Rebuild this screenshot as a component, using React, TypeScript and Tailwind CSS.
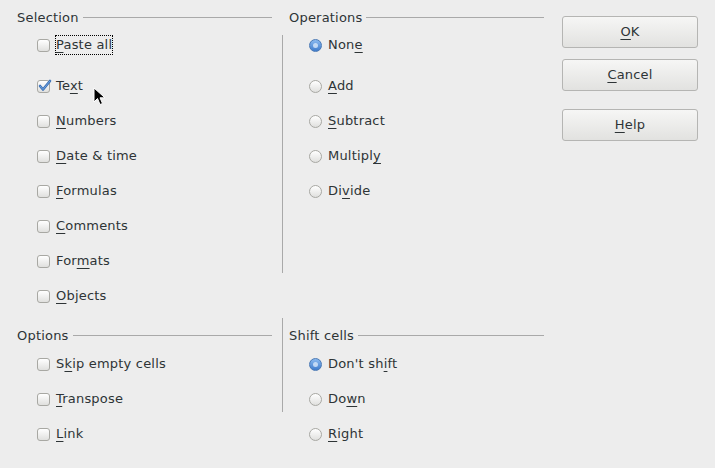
import React from 'react';

type Item = { pre: string; key: string; post: string; checked?: boolean; focus?: boolean };

function Label({ item }: { item: Item }) {
  return (
    <span>
      {item.pre}
      <span className="underline underline-offset-[3px] decoration-1">{item.key}</span>
      {item.post}
    </span>
  );
}

function Checkbox({ checked }: { checked?: boolean }) {
  return (
    <span className="relative w-[13px] h-[13px] shrink-0 rounded-[3px] border border-[#a8a8a3] bg-gradient-to-b from-[#ffffff] to-[#e0e0de]">
      {checked && (
        <svg className="absolute left-[0px] top-[-2px]" width="14" height="13" viewBox="0 0 14 13">
          <path d="M2 7 L5 10.5 L12 2" fill="none" stroke="#3a6fb5" strokeWidth="2.6" strokeLinecap="round" strokeLinejoin="round" />
          <path d="M2 7 L5 10.5 L12 2" fill="none" stroke="#6fa3e0" strokeWidth="1" strokeLinecap="round" strokeLinejoin="round" />
        </svg>
      )}
    </span>
  );
}

function Radio({ checked }: { checked?: boolean }) {
  return checked ? (
    <span className="relative w-[13px] h-[13px] shrink-0 rounded-full border border-[#4a79b5] bg-gradient-to-b from-[#8bbaf0] to-[#3f7ccc] flex items-center justify-center">
      <span className="w-[5px] h-[5px] rounded-full bg-[#d9e8fa] opacity-80" />
    </span>
  ) : (
    <span className="w-[13px] h-[13px] shrink-0 rounded-full border border-[#a8a8a3] bg-gradient-to-b from-[#ffffff] to-[#e0e0de]" />
  );
}

function Header({ title }: { title: string }) {
  return (
    <div className="h-[20px] flex items-center gap-[4px]">
      <span>{title}</span>
      <span className="flex-1 h-px bg-[#a9a9a9] mt-[-1px]" />
    </div>
  );
}

function CheckRow({ item }: { item: Item }) {
  return (
    <div className="h-[20px] flex items-center gap-[6px]">
      <Checkbox checked={item.checked} />
      {item.focus ? (
        <span className="ml-[-1px] border border-dotted border-black leading-[18px]">
          <Label item={item} />
        </span>
      ) : (
        <Label item={item} />
      )}
    </div>
  );
}

function RadioRow({ item }: { item: Item }) {
  return (
    <div className="h-[20px] flex items-center gap-[6px]">
      <Radio checked={item.checked} />
      <Label item={item} />
    </div>
  );
}

const selection: Item[] = [
  { pre: '', key: 'P', post: 'aste all', focus: true },
  { pre: 'Te', key: 'x', post: 't', checked: true },
  { pre: '', key: 'N', post: 'umbers' },
  { pre: '', key: 'D', post: 'ate & time' },
  { pre: '', key: 'F', post: 'ormulas' },
  { pre: '', key: 'C', post: 'omments' },
  { pre: 'For', key: 'm', post: 'ats' },
  { pre: '', key: 'O', post: 'bjects' },
];

const operations: Item[] = [
  { pre: 'Non', key: 'e', post: '', checked: true },
  { pre: '', key: 'A', post: 'dd' },
  { pre: '', key: 'S', post: 'ubtract' },
  { pre: 'Multipl', key: 'y', post: '' },
  { pre: 'Di', key: 'v', post: 'ide' },
];

const options: Item[] = [
  { pre: 'S', key: 'k', post: 'ip empty cells' },
  { pre: '', key: 'T', post: 'ranspose' },
  { pre: '', key: 'L', post: 'ink' },
];

const shift: Item[] = [
  { pre: "Don't sh", key: 'i', post: 'ft', checked: true },
  { pre: 'Do', key: 'w', post: 'n' },
  { pre: '', key: 'R', post: 'ight' },
];

function Button({ pre, k, post, className }: { pre: string; k: string; post: string; className?: string }) {
  return (
    <button
      className={`w-[136px] h-[32px] rounded-[3px] border border-[#b5b5b3] bg-gradient-to-b from-[#f6f6f5] to-[#e2e2e0] text-[#2e3436] flex items-center justify-center ${className ?? ''}`}
    >
      <Label item={{ pre, key: k, post }} />
    </button>
  );
}

export default function App() {
  return (
    <div
      className="relative w-[715px] h-[468px] bg-[#ededed] text-[#2e3436] text-[13px] tracking-[0.2px] flex pl-[17px] overflow-hidden"
      style={{ fontFamily: '"DejaVu Sans", sans-serif' }}
    >
      <div className="w-[527px] flex flex-col">
        {/* top section */}
        <div className="h-[318px] flex">
          <div className="w-[255px] pt-[8px] flex flex-col">
            <Header title="Selection" />
            <div className="mt-[7px] pl-[20px] flex flex-col gap-[15px]">
              {selection.map((it, i) => (
                <div key={i} className={i === 1 ? 'mt-[6px]' : ''}>
                  <CheckRow item={it} />
                </div>
              ))}
            </div>
          </div>
          <div className="ml-[10px] mt-[35px] w-px h-[238px] bg-[#a9a9a9]" />
          <div className="flex-1 pt-[8px] pl-[6px] flex flex-col">
            <Header title="Operations" />
            <div className="mt-[7px] pl-[20px] flex flex-col gap-[15px]">
              {operations.map((it, i) => (
                <div key={i} className={i === 1 ? 'mt-[6px]' : ''}>
                  <RadioRow item={it} />
                </div>
              ))}
            </div>
          </div>
        </div>
        {/* bottom section */}
        <div className="flex">
          <div className="w-[255px] pt-[8px] flex flex-col">
            <Header title="Options" />
            <div className="mt-[8px] pl-[20px] flex flex-col gap-[15px]">
              {options.map((it, i) => (
                <CheckRow key={i} item={it} />
              ))}
            </div>
          </div>
          <div className="ml-[10px] w-px h-[94px] bg-[#a9a9a9]" />
          <div className="flex-1 pt-[8px] pl-[6px] flex flex-col">
            <Header title="Shift cells" />
            <div className="mt-[8px] pl-[20px] flex flex-col gap-[15px]">
              {shift.map((it, i) => (
                <RadioRow key={i} item={it} />
              ))}
            </div>
          </div>
        </div>
      </div>
      <div className="ml-[18px] pt-[16px] flex flex-col">
        <Button pre="" k="O" post="K" />
        <Button pre="" k="C" post="ancel" className="mt-[11px]" />
        <Button pre="" k="H" post="elp" className="mt-[18px]" />
      </div>
      {/* mouse pointer */}
      <svg className="absolute left-[93px] top-[87px]" width="14" height="20" viewBox="0 0 14 20">
        <path d="M1 1 L1 15 L4.5 11.5 L7 17.5 L9.5 16.5 L7 10.8 L12 10.8 Z" fill="#000" stroke="#fff" strokeWidth="1" strokeLinejoin="round" />
      </svg>
    </div>
  );
}
